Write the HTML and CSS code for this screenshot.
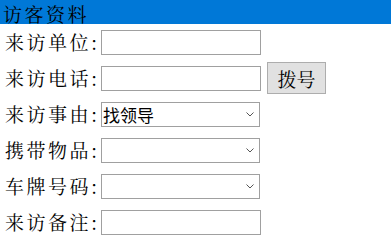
FILE: index.html
```html
<!DOCTYPE html>
<html lang="zh-CN">
<head>
<meta charset="utf-8">
<title>访客资料</title>
<link rel="stylesheet" href="styles.css">
</head>
<body>
<div class="title"><span class="title-text">访客资料</span></div>
<div class="form">
  <div class="row">
    <label class="label">来访单位:</label>
    <input class="field" type="text">
  </div>
  <div class="row">
    <label class="label">来访电话:</label>
    <input class="field" type="text">
    <button class="dial" type="button">拨号</button>
  </div>
  <div class="row">
    <label class="label">来访事由:</label>
    <div class="select-wrap">
      <select class="select"><option>找领导</option></select>
      <svg class="chev" width="8" height="5" viewBox="0 0 8 5"><path d="M0.5 0.5 L4 4 L7.5 0.5" fill="none" stroke="#555" stroke-width="1"/></svg>
    </div>
  </div>
  <div class="row">
    <label class="label">携带物品:</label>
    <div class="select-wrap">
      <select class="select"><option></option></select>
      <svg class="chev" width="8" height="5" viewBox="0 0 8 5"><path d="M0.5 0.5 L4 4 L7.5 0.5" fill="none" stroke="#555" stroke-width="1"/></svg>
    </div>
  </div>
  <div class="row">
    <label class="label">车牌号码:</label>
    <div class="select-wrap">
      <select class="select"><option></option></select>
      <svg class="chev" width="8" height="5" viewBox="0 0 8 5"><path d="M0.5 0.5 L4 4 L7.5 0.5" fill="none" stroke="#555" stroke-width="1"/></svg>
    </div>
  </div>
  <div class="row">
    <label class="label">来访备注:</label>
    <input class="field" type="text">
  </div>
</div>
</body>
</html>
```

FILE: styles.css
```css
html, body {
  margin: 0;
  padding: 0;
  background: #ffffff;
}
body {
  font-family: "Noto Serif CJK SC", "Noto Sans CJK SC", serif;
  color: #000;
  width: 391px;
  height: 240px;
  overflow: hidden;
}
.title {
  height: 24px;
  background: #0078d7;
  padding-left: 3px;
}
.title-text {
  display: block;
  font-size: 19px;
  line-height: normal;
  letter-spacing: 2.5px;
  color: #000;
  white-space: nowrap;
}
.form {
  display: flex;
  flex-direction: column;
}
.row {
  height: 36px;
  display: flex;
  align-items: center;
}
.label {
  width: 96px;
  padding-left: 5px;
  font-size: 19px;
  line-height: 28px;
  letter-spacing: 2.5px;
  white-space: nowrap;
  box-sizing: content-box;
}
.field {
  box-sizing: border-box;
  width: 160px;
  height: 25px;
  margin: 0;
  border: 1px solid #a0a0a0;
  border-radius: 0;
  padding: 0 2px;
  outline: none;
  background: #fff;
}
.dial {
  box-sizing: border-box;
  margin-left: 6px;
  width: 59px;
  height: 32px;
  padding: 0;
  background: #e1e1e1;
  border: 1px solid #adadad;
  border-radius: 0;
  font-family: "Noto Serif CJK SC", "Noto Sans CJK SC", serif;
  font-size: 19px;
  color: #000;
}
.select-wrap {
  position: relative;
  width: 159px;
  height: 25px;
}
.select {
  box-sizing: border-box;
  width: 159px;
  height: 25px;
  margin: 0;
  border: 1px solid #a0a0a0;
  border-radius: 0;
  padding: 0 0 0 1px;
  background: #fff;
  -webkit-appearance: none;
  appearance: none;
  font-family: "Noto Sans CJK SC", sans-serif;
  font-size: 17px;
  line-height: 23px;
  color: #000;
  outline: none;
}
.chev {
  position: absolute;
  right: 6px;
  top: 10px;
  pointer-events: none;
}
```
